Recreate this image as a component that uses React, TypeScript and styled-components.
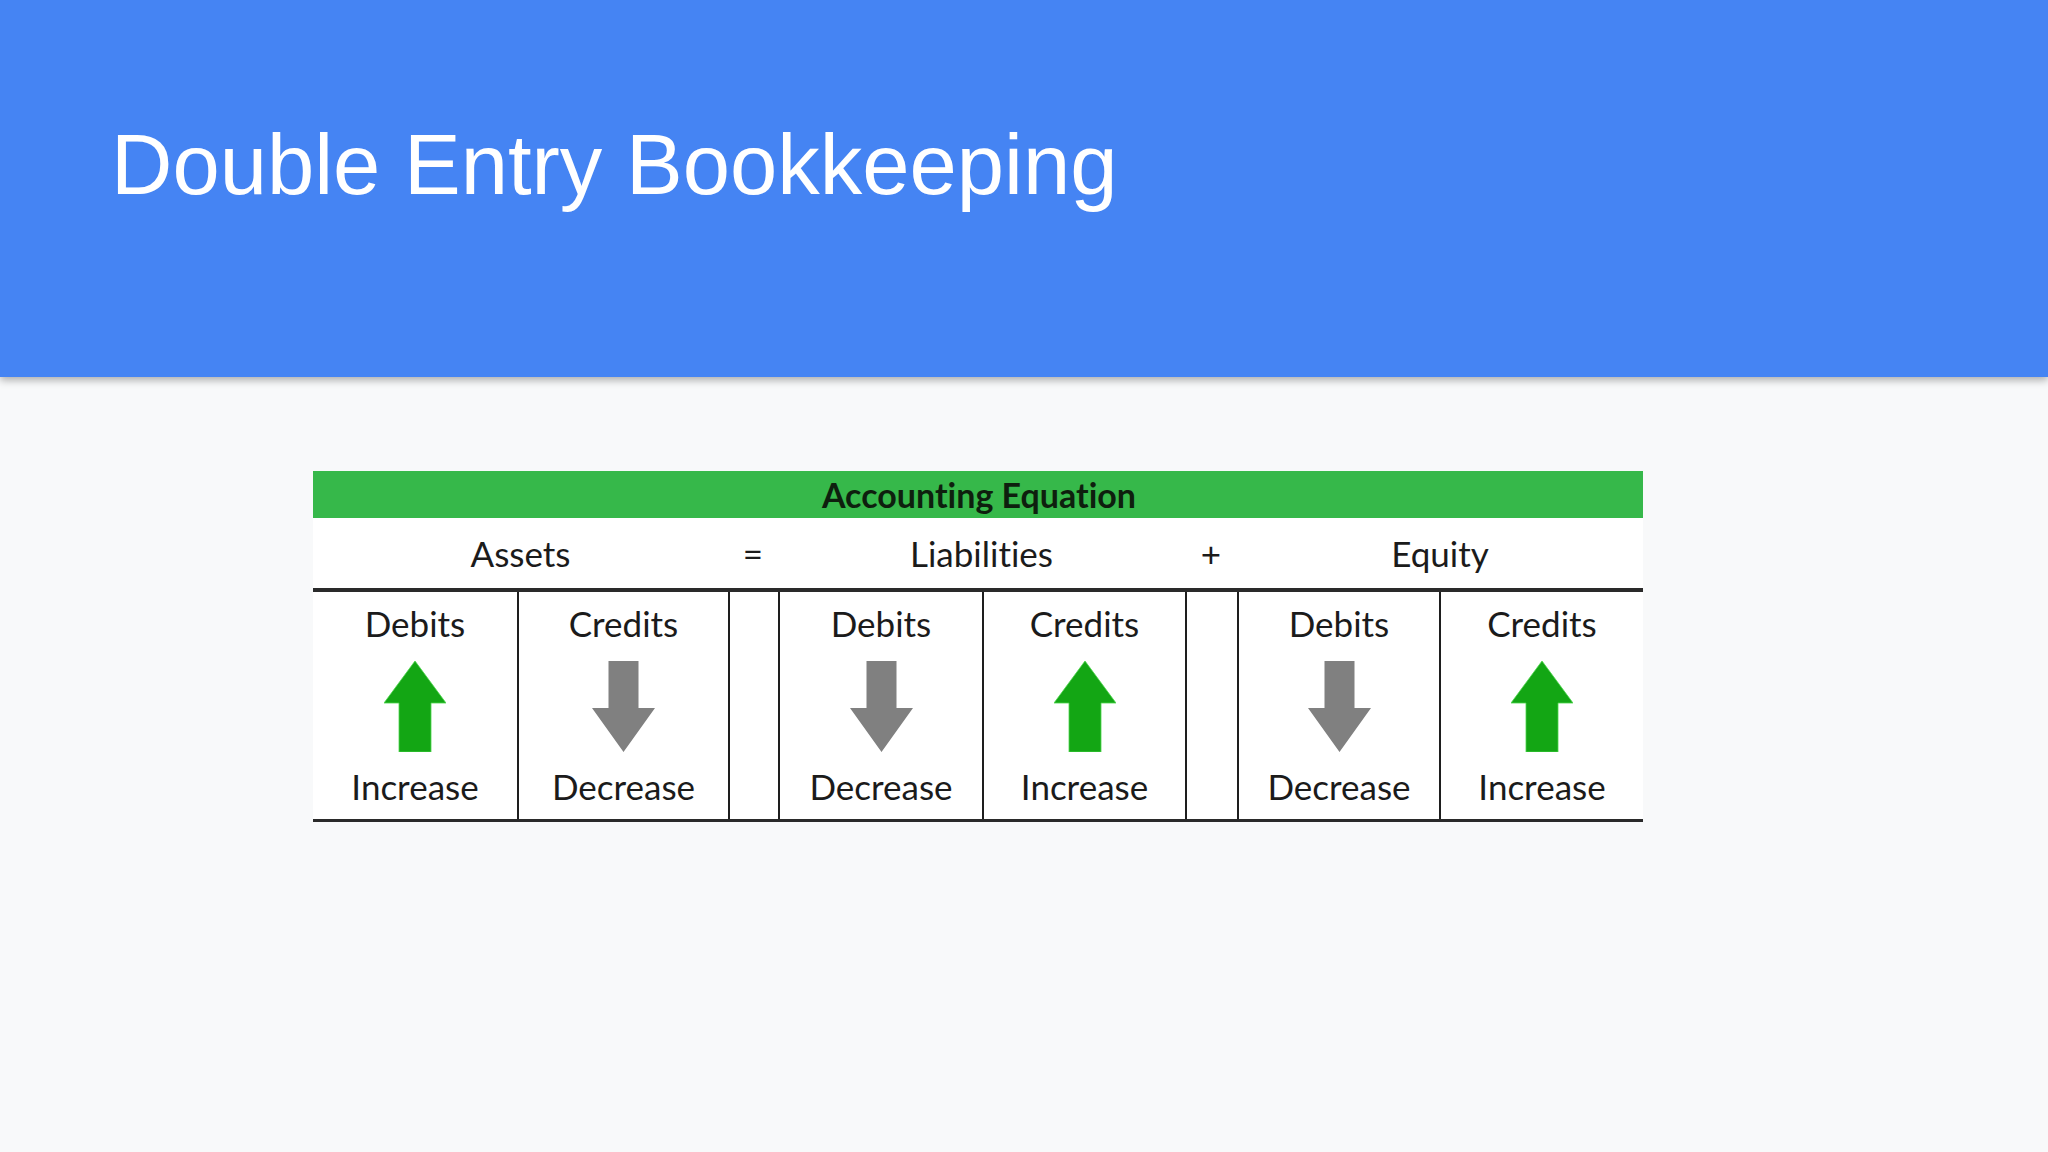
import React from "react";
import styled, { createGlobalStyle } from "styled-components";

const Global = createGlobalStyle`
  html, body { margin: 0; padding: 0; }
  body { background: #f8f9fa; }
`;

const Page = styled.div`
  min-height: 100vh;
  background: #f8f9fa;
  display: flex;
  flex-direction: column;
`;

const Header = styled.header`
  height: 377px;
  background: #4584f3;
  box-shadow: 0 3px 8px rgba(0, 0, 0, 0.32);
  padding: 122px 0 0 111px;
  box-sizing: border-box;
  position: relative;
  z-index: 1;
`;

const Title = styled.h1`
  margin: 0;
  font-family: "Liberation Sans", Arial, sans-serif;
  font-weight: 400;
  font-size: 85px;
  line-height: 85px;
  color: #ffffff;
`;

const Table = styled.section`
  margin: 94px 0 0 313px;
  width: 1330px;
  background: #ffffff;
  font-family: Lato, "Open Sans", sans-serif;
  font-variant-ligatures: none;
  font-feature-settings: "liga" 0, "clig" 0;
  color: #1b1b1b;
`;

const TitleBar = styled.div`
  height: 47px;
  background: #36b84a;
  display: flex;
  align-items: center;
  justify-content: center;
  font-weight: 700;
  font-size: 34px;
  color: #0e1f0e;
  padding-left: 2px;
  box-sizing: border-box;
`;

const cols = "204px 211px 50px 204px 203px 52px 202px 204px";

const EqRow = styled.div`
  display: grid;
  grid-template-columns: ${cols};
  height: 74px;
  box-sizing: border-box;
  border-bottom: 4px solid #2a2a2a;
`;

const EqCell = styled.div<{ $span: number }>`
  grid-column: span ${(p) => p.$span};
  display: flex;
  justify-content: center;
  padding-top: 15px;
  font-size: 35px;
  line-height: 40px;
`;

const CellRow = styled.div`
  display: grid;
  grid-template-columns: ${cols};
  height: 230px;
  box-sizing: border-box;
  border-bottom: 3px solid #2a2a2a;
`;

const Cell = styled.div<{ $first?: boolean }>`
  display: flex;
  flex-direction: column;
  align-items: center;
  border-left: ${(p) => (p.$first ? "none" : "2px solid #1e1e1e")};
  padding-top: 11px;
  font-size: 35px;
  line-height: 40px;
`;

const Label = styled.div``;

const ArrowBox = styled.div`
  height: 91px;
  margin: 18px 0 14px;
  display: flex;
  align-items: flex-start;
  justify-content: center;
`;

const UpArrow = () => (
  <svg width="62" height="91" viewBox="0 0 62 91">
    <polygon
      points="31,0 62,42 47,42 47,91 15,91 15,42 0,42"
      fill="#13a614"
      stroke="#4cd64c"
      strokeWidth="0.8"
    />
  </svg>
);

const DownArrow = () => (
  <svg width="63" height="91" viewBox="0 0 63 91">
    <polygon
      points="16.5,0 46.5,0 46.5,47 63,47 31.5,91 0,47 16.5,47"
      fill="#808080"
    />
  </svg>
);

type Col = { top: string; up: boolean; bottom: string } | null;

const columns: Col[] = [
  { top: "Debits", up: true, bottom: "Increase" },
  { top: "Credits", up: false, bottom: "Decrease" },
  null,
  { top: "Debits", up: false, bottom: "Decrease" },
  { top: "Credits", up: true, bottom: "Increase" },
  null,
  { top: "Debits", up: false, bottom: "Decrease" },
  { top: "Credits", up: true, bottom: "Increase" },
];

export default function App() {
  return (
    <Page>
      <Global />
      <Header>
        <Title>Double Entry Bookkeeping</Title>
      </Header>
      <Table>
        <TitleBar>Accounting Equation</TitleBar>
        <EqRow>
          <EqCell $span={2}>Assets</EqCell>
          <EqCell $span={1}>=</EqCell>
          <EqCell $span={2}>Liabilities</EqCell>
          <EqCell $span={1}>+</EqCell>
          <EqCell $span={2}>Equity</EqCell>
        </EqRow>
        <CellRow>
          {columns.map((c, i) => (
            <Cell key={i} $first={i === 0}>
              {c && (
                <>
                  <Label>{c.top}</Label>
                  <ArrowBox>{c.up ? <UpArrow /> : <DownArrow />}</ArrowBox>
                  <Label>{c.bottom}</Label>
                </>
              )}
            </Cell>
          ))}
        </CellRow>
      </Table>
    </Page>
  );
}
